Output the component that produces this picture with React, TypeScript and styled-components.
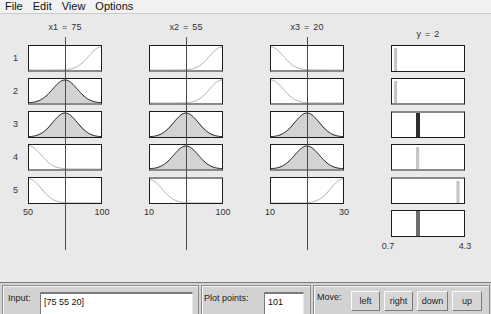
import React from 'react';
import styled, { createGlobalStyle } from 'styled-components';

type Shape = 'rise' | 'fall' | 'gauss';
type Edge = 'k' | 'g';
interface Cell { shape: Shape; fill?: boolean; top?: Edge; bottom?: Edge }
interface OutCell { v: number; color: string; w: number; full?: boolean; top?: Edge; bottom?: Edge }

const inputs: { title: string; value: number; min: number; max: number; cells: Cell[] }[] = [
  {
    title: 'x1 = 75', value: 75, min: 50, max: 100,
    cells: [
      { shape: 'rise', bottom: 'g' },
      { shape: 'gauss', fill: true, bottom: 'g' },
      { shape: 'gauss', fill: true },
      { shape: 'fall', bottom: 'g' },
      { shape: 'fall' },
    ],
  },
  {
    title: 'x2 = 55', value: 55, min: 10, max: 100,
    cells: [
      { shape: 'rise', bottom: 'g' },
      { shape: 'rise', bottom: 'g' },
      { shape: 'gauss', fill: true },
      { shape: 'gauss', fill: true, bottom: 'g' },
      { shape: 'fall', top: 'g' },
    ],
  },
  {
    title: 'x3 = 20', value: 20, min: 10, max: 30,
    cells: [
      { shape: 'fall', bottom: 'g' },
      { shape: 'fall', bottom: 'g' },
      { shape: 'gauss', fill: true },
      { shape: 'gauss', fill: true, bottom: 'g' },
      { shape: 'rise' },
    ],
  },
];

const OUT_MIN = 0.7;
const OUT_MAX = 4.3;
const outputs: OutCell[] = [
  { v: 0.88, color: '#c4c4c4', w: 3 },
  { v: 0.88, color: '#c4c4c4', w: 3, bottom: 'g' },
  { v: 2.0, color: '#2e2e2e', w: 4, full: true, top: 'g' },
  { v: 1.98, color: '#c4c4c4', w: 3, bottom: 'g' },
  { v: 4.0, color: '#c4c4c4', w: 3, top: 'g' },
  { v: 2.0, color: '#6e6e6e', w: 4, full: true },
];

const SIG = 0.17;
const CENTER: Record<Shape, number> = { rise: 1, fall: 0, gauss: 0.5 };

function curvePoints(shape: Shape): string[] {
  const pts: string[] = [];
  for (let i = 0; i <= 80; i++) {
    const t = i / 80;
    const m = Math.exp(-((t - CENTER[shape]) ** 2) / (2 * SIG * SIG));
    pts.push(`${(t * 100).toFixed(2)},${(100 - m * 96).toFixed(2)}`);
  }
  return pts;
}

const Global = createGlobalStyle`
  html, body { margin: 0; padding: 0; background: #e9e9e9; overflow: hidden; }
  body { font-family: "Liberation Sans", Arial, sans-serif; color: #1e1e1e; }
`;

const Window = styled.div`
  width: 491px;
  height: 314px;
  display: flex;
  flex-direction: column;
  background: #e9e9e9;
  overflow: hidden;
`;

const MenuBar = styled.div`
  height: 13px;
  display: flex;
  align-items: center;
  gap: 10px;
  padding-left: 5px;
  background: #f2f2f2;
  border-bottom: 1px solid #cbcbcb;
  font-size: 11px;
  line-height: 13px;
  color: #111;
  flex: none;
`;

const MenuItem = styled.span``;

const Main = styled.div`
  height: 268px;
  display: flex;
  align-items: flex-start;
  flex: none;
`;

const RowLabels = styled.div`
  width: 28px;
  box-sizing: border-box;
  padding-top: 31px;
  display: flex;
  flex-direction: column;
  gap: 6px;
`;

const RowLabel = styled.div`
  height: 27px;
  line-height: 27px;
  font-size: 9px;
  text-align: right;
  padding-right: 10px;
  color: #333;
`;

const Plots = styled.div`
  display: flex;
  gap: 47px;
  align-items: flex-start;
`;

const Column = styled.div`
  position: relative;
  width: 74px;
  display: flex;
  flex-direction: column;
`;

const Title = styled.div<{ $pad: number }>`
  height: 31px;
  box-sizing: border-box;
  padding-top: ${p => p.$pad}px;
  font-size: 9px;
  line-height: 10px;
  word-spacing: 1.5px;
  text-align: center;
  color: #333;
`;

const Stack = styled.div`
  display: flex;
  flex-direction: column;
  gap: 6px;
`;

const edge = (e: Edge | undefined) => (e === 'g' ? '2px solid #8a8a8a' : '1px solid #1c1c1c');

const PlotBox = styled.div<{ $top?: Edge; $bottom?: Edge }>`
  box-sizing: border-box;
  width: 74px;
  height: 27px;
  background: #fff;
  border-left: 1px solid #1c1c1c;
  border-right: 1px solid #1c1c1c;
  border-top: ${p => edge(p.$top)};
  border-bottom: ${p => edge(p.$bottom)};
  overflow: hidden;
  & > svg { display: block; width: 100%; height: 100%; }
`;

const VLine = styled.div`
  position: absolute;
  top: 23px;
  width: 1px;
  height: 213px;
  background: #4c4c4c;
  z-index: 2;
`;

const AxisRow = styled.div<{ $mt: number }>`
  display: flex;
  justify-content: space-between;
  margin-top: ${p => p.$mt}px;
  font-size: 9px;
  line-height: 10px;
  color: #333;
`;

const AxisLabel = styled.span<{ $side: 'l' | 'r'; $shift?: number }>`
  transform: translateX(${p => (p.$side === 'l' ? `calc(-50% - ${p.$shift ?? 0}px)` : `calc(50% + ${p.$shift ?? 0}px)`)});
`;

const Controls = styled.div`
  height: 32px;
  box-sizing: border-box;
  display: flex;
  gap: 2px;
  padding: 2px 0 0 2px;
  background: #d2d2d2;
  border-top: 1px solid #7c7c7c;
  flex: none;
  overflow: hidden;
`;

const Group = styled.div<{ $w: number; $pl: number; $pt: number }>`
  width: ${p => p.$w}px;
  height: 36px;
  box-sizing: border-box;
  flex: none;
  display: flex;
  align-items: flex-start;
  padding: ${p => p.$pt}px 0 0 ${p => p.$pl}px;
  border: 1px solid #8e8e8e;
  box-shadow: inset 1px 1px 0 #f6f6f6;
  font-size: 9px;
`;

const Label = styled.span<{ $w: number }>`
  width: ${p => p.$w}px;
  flex: none;
  line-height: 10px;
  padding-top: 1px;
  color: #222;
`;

const Field = styled.div<{ $w: number }>`
  width: ${p => p.$w}px;
  height: 22px;
  box-sizing: border-box;
  background: #fff;
  border-top: 2px solid #7a7a7a;
  border-left: 1px solid #7a7a7a;
  border-right: 1px solid #e8e8e8;
  padding: 3px 0 0 3px;
  font-size: 9px;
  line-height: 10px;
  color: #111;
`;

const Buttons = styled.div`
  display: flex;
  gap: 4px;
`;

const Button = styled.div<{ $w: number }>`
  width: ${p => p.$w}px;
  height: 20px;
  box-sizing: border-box;
  display: flex;
  align-items: center;
  justify-content: center;
  background: #d6d6d6;
  border-top: 1px solid #fafafa;
  border-left: 1px solid #fafafa;
  border-right: 1px solid #7a7a7a;
  border-bottom: 1px solid #7a7a7a;
  font-size: 9px;
  color: #222;
`;

const MFPlot: React.FC<{ cell: Cell }> = ({ cell }) => {
  const pts = curvePoints(cell.shape);
  const line = 'M' + pts.join(' L');
  return (
    <svg viewBox="0 0 100 100" preserveAspectRatio="none">
      {cell.fill && <path d={`M0,100 L${pts.join(' L')} L100,100 Z`} fill="#d3d3d3" />}
      <path
        d={line}
        fill="none"
        stroke={cell.fill ? '#141414' : '#ababab'}
        strokeWidth={1}
        vectorEffect="non-scaling-stroke"
      />
    </svg>
  );
};

const OutPlot: React.FC<{ cell: OutCell }> = ({ cell }) => {
  const x = ((cell.v - OUT_MIN) / (OUT_MAX - OUT_MIN)) * 72;
  const y = cell.full ? 0 : 2;
  return (
    <svg viewBox="0 0 72 25" preserveAspectRatio="none">
      <rect x={x - cell.w / 2} y={y} width={cell.w} height={25 - y} fill={cell.color} />
    </svg>
  );
};

export default function App() {
  return (
    <Window>
      <Global />
      <MenuBar>
        <MenuItem>File</MenuItem>
        <MenuItem>Edit</MenuItem>
        <MenuItem>View</MenuItem>
        <MenuItem>Options</MenuItem>
      </MenuBar>
      <Main>
        <RowLabels>
          {[1, 2, 3, 4, 5].map(n => (
            <RowLabel key={n}>{n}</RowLabel>
          ))}
        </RowLabels>
        <Plots>
          {inputs.map(inp => (
            <Column key={inp.title}>
              <Title $pad={8}>{inp.title}</Title>
              <Stack>
                {inp.cells.map((c, i) => (
                  <PlotBox key={i} $top={c.top} $bottom={c.bottom}>
                    <MFPlot cell={c} />
                  </PlotBox>
                ))}
              </Stack>
              <AxisRow $mt={3}>
                <AxisLabel $side="l">{inp.min}</AxisLabel>
                <AxisLabel $side="r">{inp.max}</AxisLabel>
              </AxisRow>
              <VLine style={{ left: `${((inp.value - inp.min) / (inp.max - inp.min)) * 74}px` }} />
            </Column>
          ))}
          <Column>
            <Title $pad={15}>y = 2</Title>
            <Stack>
              {outputs.map((c, i) => (
                <PlotBox key={i} $top={c.top} $bottom={c.bottom}>
                  <OutPlot cell={c} />
                </PlotBox>
              ))}
            </Stack>
            <AxisRow $mt={4}>
              <AxisLabel $side="l" $shift={3}>0.7</AxisLabel>
              <AxisLabel $side="r">4.3</AxisLabel>
            </AxisRow>
          </Column>
        </Plots>
      </Main>
      <Controls>
        <Group $w={197} $pl={5} $pt={6}>
          <Label $w={32}>Input:</Label>
          <Field $w={153}>[75 55 20]</Field>
        </Group>
        <Group $w={110} $pl={2} $pt={6}>
          <Label $w={60}>Plot points:</Label>
          <Field $w={40}>101</Field>
        </Group>
        <Group $w={177} $pl={3} $pt={5}>
          <Label $w={34}>Move:</Label>
          <Buttons>
            <Button $w={29}>left</Button>
            <Button $w={29}>right</Button>
            <Button $w={31}>down</Button>
            <Button $w={30}>up</Button>
          </Buttons>
        </Group>
      </Controls>
    </Window>
  );
}
